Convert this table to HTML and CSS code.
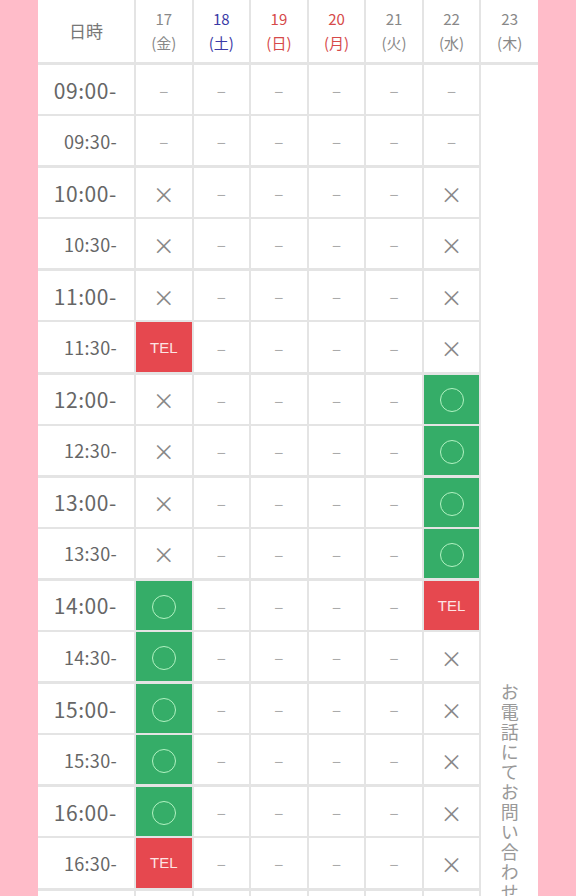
FILE: index.html
```html
<!DOCTYPE html>
<html lang="ja">
<head>
    <meta charset="UTF-8">
    <meta name="viewport" content="width=device-width, initial-scale=1.0">
    <title>予約状況</title>
    <link rel="stylesheet" href="styles.css">
</head>
<body>
    <div class="page">
        <table class="calendar">
            <colgroup>
                <col class="col-time">
                <col span="7">
            </colgroup>
            <thead>
                <tr>
                    <th class="head-label">日時</th>
                    <th>17<br>(金)</th>
                    <th class="sat">18<br>(土)</th>
                    <th class="sun">19<br>(日)</th>
                    <th class="sun">20<br>(月)</th>
                    <th>21<br>(火)</th>
                    <th>22<br>(水)</th>
                    <th>23<br>(木)</th>
                </tr>
            </thead>
            <tbody>
                <tr class="hour">
                    <th class="time">09:00-</th>
                    <td class="none">–</td><td class="none">–</td><td class="none">–</td><td class="none">–</td><td class="none">–</td><td class="none">–</td>
                    <td class="phone-only" rowspan="20"><span class="phone-text">お電話にてお問い合わせください</span></td>
                </tr>
                <tr>
                    <th class="time">09:30-</th>
                    <td class="none">–</td><td class="none">–</td><td class="none">–</td><td class="none">–</td><td class="none">–</td><td class="none">–</td>
                </tr>
                <tr class="hour">
                    <th class="time">10:00-</th>
                    <td class="full">×</td><td class="none">–</td><td class="none">–</td><td class="none">–</td><td class="none">–</td><td class="full">×</td>
                </tr>
                <tr>
                    <th class="time">10:30-</th>
                    <td class="full">×</td><td class="none">–</td><td class="none">–</td><td class="none">–</td><td class="none">–</td><td class="full">×</td>
                </tr>
                <tr class="hour">
                    <th class="time">11:00-</th>
                    <td class="full">×</td><td class="none">–</td><td class="none">–</td><td class="none">–</td><td class="none">–</td><td class="full">×</td>
                </tr>
                <tr>
                    <th class="time">11:30-</th>
                    <td class="tel">TEL</td><td class="none">–</td><td class="none">–</td><td class="none">–</td><td class="none">–</td><td class="full">×</td>
                </tr>
                <tr class="hour">
                    <th class="time">12:00-</th>
                    <td class="full">×</td><td class="none">–</td><td class="none">–</td><td class="none">–</td><td class="none">–</td><td class="open"><span class="ring"></span></td>
                </tr>
                <tr>
                    <th class="time">12:30-</th>
                    <td class="full">×</td><td class="none">–</td><td class="none">–</td><td class="none">–</td><td class="none">–</td><td class="open"><span class="ring"></span></td>
                </tr>
                <tr class="hour">
                    <th class="time">13:00-</th>
                    <td class="full">×</td><td class="none">–</td><td class="none">–</td><td class="none">–</td><td class="none">–</td><td class="open"><span class="ring"></span></td>
                </tr>
                <tr>
                    <th class="time">13:30-</th>
                    <td class="full">×</td><td class="none">–</td><td class="none">–</td><td class="none">–</td><td class="none">–</td><td class="open"><span class="ring"></span></td>
                </tr>
                <tr class="hour">
                    <th class="time">14:00-</th>
                    <td class="open"><span class="ring"></span></td><td class="none">–</td><td class="none">–</td><td class="none">–</td><td class="none">–</td><td class="tel">TEL</td>
                </tr>
                <tr>
                    <th class="time">14:30-</th>
                    <td class="open"><span class="ring"></span></td><td class="none">–</td><td class="none">–</td><td class="none">–</td><td class="none">–</td><td class="full">×</td>
                </tr>
                <tr class="hour">
                    <th class="time">15:00-</th>
                    <td class="open"><span class="ring"></span></td><td class="none">–</td><td class="none">–</td><td class="none">–</td><td class="none">–</td><td class="full">×</td>
                </tr>
                <tr>
                    <th class="time">15:30-</th>
                    <td class="open"><span class="ring"></span></td><td class="none">–</td><td class="none">–</td><td class="none">–</td><td class="none">–</td><td class="full">×</td>
                </tr>
                <tr class="hour">
                    <th class="time">16:00-</th>
                    <td class="open"><span class="ring"></span></td><td class="none">–</td><td class="none">–</td><td class="none">–</td><td class="none">–</td><td class="full">×</td>
                </tr>
                <tr>
                    <th class="time">16:30-</th>
                    <td class="tel">TEL</td><td class="none">–</td><td class="none">–</td><td class="none">–</td><td class="none">–</td><td class="full">×</td>
                </tr>
                <tr class="hour">
                    <th class="time">17:00-</th>
                    <td class="full">×</td><td class="none">–</td><td class="none">–</td><td class="none">–</td><td class="none">–</td><td class="full">×</td>
                </tr>
                <tr>
                    <th class="time">17:30-</th>
                    <td class="full">×</td><td class="none">–</td><td class="none">–</td><td class="none">–</td><td class="none">–</td><td class="full">×</td>
                </tr>
                <tr class="hour">
                    <th class="time">18:00-</th>
                    <td class="full">×</td><td class="none">–</td><td class="none">–</td><td class="none">–</td><td class="none">–</td><td class="full">×</td>
                </tr>
                <tr>
                    <th class="time">18:30-</th>
                    <td class="full">×</td><td class="none">–</td><td class="none">–</td><td class="none">–</td><td class="none">–</td><td class="full">×</td>
                </tr>
            </tbody>
        </table>
    </div>
</body>
</html>
```

FILE: styles.css
```css
body {
    margin: 0;
    padding: 0;
    background-color: #ffbcc9;
    font-family: "Noto Sans CJK JP", "Noto Sans", sans-serif;
    color: #777;
}

.page {
    padding: 0 38px;
}

.calendar {
    width: 100%;
    background: #fff;
    border-collapse: collapse;
    table-layout: fixed;
}

.col-time {
    width: 97px;
}

.calendar th,
.calendar td {
    border: 2px solid #e4e4e4;
    padding: 0;
    text-align: center;
    font-weight: normal;
}

.calendar tr > :first-child {
    border-left: none;
}

.calendar tr > :last-child {
    border-right: none;
}

.calendar thead th {
    height: 62px;
    border-top: none;
    border-bottom-width: 3px;
    font-size: 15px;
    line-height: 24px;
    color: #888;
}

.calendar thead .head-label {
    font-size: 17px;
    color: #777;
}

.calendar thead .sat {
    color: #3a3aa6;
}

.calendar thead .sun {
    color: #d64a4a;
}

.calendar tbody td,
.calendar tbody th {
    height: 49.1px;
}

.calendar tbody tr.hour > * {
    border-top-width: 3px;
}

.time {
    text-align: right !important;
    padding-right: 17px !important;
    font-size: 18px;
    color: #666;
    letter-spacing: 0.3px;
}

.hour .time {
    font-size: 21px;
    letter-spacing: 0.6px;
}

.none {
    font-size: 17px;
    color: #aaa;
}

.full {
    font-size: 22px;
    color: #888;
}

.tel {
    background-color: #e6484f;
    color: #fde4e4;
    font-size: 15px;
    font-family: "Liberation Sans", sans-serif;
}

.open {
    background-color: #35ad68;
}

.ring {
    display: inline-block;
    width: 22px;
    height: 22px;
    border: 1.5px solid #b2f2c2;
    border-radius: 50%;
    vertical-align: middle;
}

.calendar .phone-only {
    vertical-align: top;
    padding-top: 618px;
    border-top: none;
    border-bottom: none;
}

.phone-text {
    writing-mode: vertical-rl;
    white-space: nowrap;
    font-size: 18px;
    letter-spacing: 2px;
    color: #999;
}
```
